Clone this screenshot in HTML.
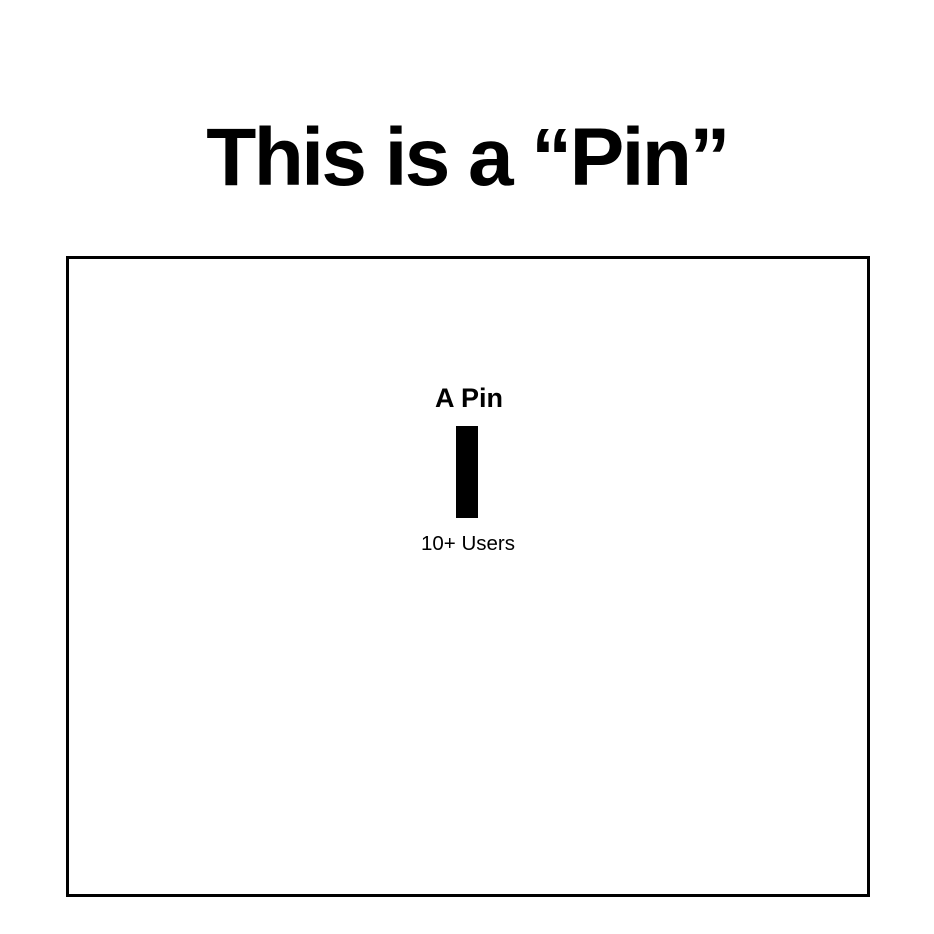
<!DOCTYPE html>
<html><head><style>
html,body{margin:0;padding:0;background:#fff;width:934px;height:934px;overflow:hidden;font-family:"Liberation Sans",sans-serif;color:#000}
.t{position:absolute;left:0;width:934px;text-align:center;font-weight:bold;font-size:82px;top:110px;line-height:96px;letter-spacing:-2.6px}
.box{position:absolute;left:66px;top:256px;width:798px;height:635px;border:3px solid #000}
.a{position:absolute;left:369px;width:200px;text-align:center;font-weight:bold;font-size:27px;top:380px;line-height:36px}
.bar{position:absolute;left:456px;top:426px;width:22px;height:92px;background:#000}
.u{position:absolute;left:368px;width:200px;text-align:center;font-size:20.5px;top:531px;line-height:26px}
</style></head><body>
<div class="t">This is a “Pin”</div>
<div class="box"></div>
<div class="a">A Pin</div>
<div class="bar"></div>
<div class="u">10+ Users</div>
</body></html>
